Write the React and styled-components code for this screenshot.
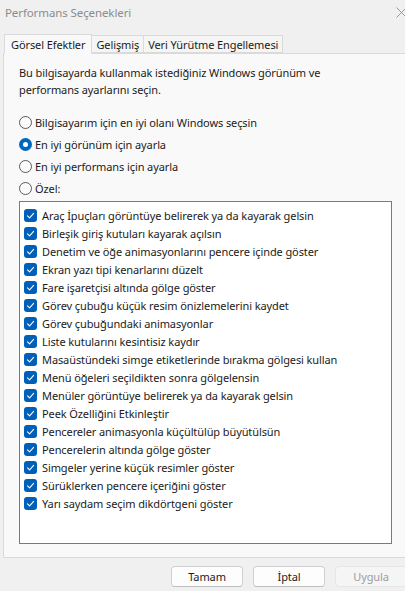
import React from "react";
import styled, { createGlobalStyle } from "styled-components";

const Global = createGlobalStyle`
  html, body { margin: 0; padding: 0; }
  body { font-family: "Noto Sans", "Open Sans", sans-serif; background: #f0f0f0; }
  * { box-sizing: border-box; }
`;

const Window = styled.div`
  width: 405px;
  height: 591px;
  overflow: hidden;
  background: #f0f0f0;
  display: flex;
  flex-direction: column;
  font-size: 11px;
  letter-spacing: -0.1px;
  color: #1b1b1b;
`;

const TitleBar = styled.div`
  height: 24px;
  display: flex;
  align-items: center;
  justify-content: space-between;
  padding: 0 0 0 5px;
  color: #8c8c8c;
  font-size: 11.5px;
`;

const Close = styled.div`
  width: 20px;
  display: flex;
  justify-content: flex-end;
  margin-right: -2px;
`;

const Body = styled.div`
  padding: 9px 0 0 3px;
  display: flex;
  flex-direction: column;
`;

const TabStrip = styled.div`
  display: flex;
  align-items: flex-end;
  height: 20px;
  padding-left: 1px;
  position: relative;
  z-index: 1;
`;

const Tab = styled.div`
  height: ${(p) => (p.$active ? "20px" : "18px")};
  padding: 0 ${(p) => (p.$active ? "6px" : "4px")};
  display: flex;
  align-items: center;
  background: ${(p) => (p.$active ? "#f9f9f9" : "#f5f5f5")};
  border: 1px solid #dadada;
  border-bottom: 1px solid ${(p) => (p.$active ? "#f9f9f9" : "#dadada")};
  margin-left: ${(p) => (p.$active ? "0" : "-1px")};
  margin-bottom: ${(p) => (p.$active ? "-1px" : "0")};
  color: #1b1b1b;
  white-space: nowrap;
`;

const Panel = styled.div`
  width: 410px;
  height: 505px;
  background: #f9f9f9;
  border: 1px solid #dadada;
  padding: 10px 0 0 15px;
  display: flex;
  flex-direction: column;
`;

const Description = styled.p`
  margin: 0;
  width: 330px;
  line-height: 17px;
`;

const RadioGroup = styled.div`
  margin-top: 13px;
  display: flex;
  flex-direction: column;
`;

const RadioRow = styled.label`
  height: 22px;
  display: flex;
  align-items: center;
  gap: 3px;
  white-space: nowrap;
`;

const RadioCircle = styled.span`
  width: 13px;
  height: 13px;
  border-radius: 50%;
  border: ${(p) => (p.$on ? "none" : "1px solid #5a5a5a")};
  background: ${(p) => (p.$on ? "#0067c0" : "#fbfbfb")};
  display: flex;
  align-items: center;
  justify-content: center;
  flex: none;
  &::after {
    content: "";
    display: ${(p) => (p.$on ? "block" : "none")};
    width: 5px;
    height: 5px;
    border-radius: 50%;
    background: #fff;
  }
`;

const ListBox = styled.div`
  margin-top: 2px;
  width: 373px;
  height: 343px;
  background: #fff;
  border: 1px solid #7a7a7a;
  padding: 4px 0 0 4px;
  display: flex;
  flex-direction: column;
`;

const CheckRow = styled.div`
  height: 18px;
  display: flex;
  align-items: center;
  gap: 5px;
  white-space: nowrap;
`;

const CheckBox = styled.span`
  width: 13px;
  height: 13px;
  border-radius: 3px;
  background: #005fb8;
  display: flex;
  align-items: center;
  justify-content: center;
  flex: none;
`;

const Footer = styled.div`
  display: flex;
  justify-content: flex-end;
  gap: 10px;
  padding: 8px 0 0 0;
  margin-right: -2px;
`;

const Button = styled.button`
  width: 72px;
  height: 21px;
  font-family: inherit;
  font-size: 11px;
  letter-spacing: inherit;
  border-radius: 4px;
  border: 1px solid ${(p) => (p.$disabled ? "#e6e6e6" : "#d0d0d0")};
  border-bottom-color: ${(p) => (p.$disabled ? "#e6e6e6" : "#bdbdbd")};
  background: ${(p) => (p.$disabled ? "#f5f5f5" : "#fdfdfd")};
  color: ${(p) => (p.$disabled ? "#9d9d9d" : "#1b1b1b")};
  padding: 0;
`;

const Check = () => (
  <svg width="9" height="9" viewBox="0 0 9 9">
    <path d="M1.5 4.8 L3.6 6.8 L7.6 2.4" fill="none" stroke="#fff" strokeWidth="1.1" strokeLinecap="round" strokeLinejoin="round" />
  </svg>
);

const radios = [
  { label: "Bilgisayarım için en iyi olanı Windows seçsin", on: false },
  { label: "En iyi görünüm için ayarla", on: true },
  { label: "En iyi performans için ayarla", on: false },
  { label: "Özel:", on: false },
];

const items = [
  "Araç İpuçları görüntüye belirerek ya da kayarak gelsin",
  "Birleşik giriş kutuları kayarak açılsın",
  "Denetim ve öğe animasyonlarını pencere içinde göster",
  "Ekran yazı tipi kenarlarını düzelt",
  "Fare işaretçisi altında gölge göster",
  "Görev çubuğu küçük resim önizlemelerini kaydet",
  "Görev çubuğundaki animasyonlar",
  "Liste kutularını kesintisiz kaydır",
  "Masaüstündeki simge etiketlerinde bırakma gölgesi kullan",
  "Menü öğeleri seçildikten sonra gölgelensin",
  "Menüler görüntüye belirerek ya da kayarak gelsin",
  "Peek Özelliğini Etkinleştir",
  "Pencereler animasyonla küçültülüp büyütülsün",
  "Pencerelerin altında gölge göster",
  "Simgeler yerine küçük resimler göster",
  "Sürüklerken pencere içeriğini göster",
  "Yarı saydam seçim dikdörtgeni göster",
];

export default function App() {
  return (
    <>
      <Global />
      <Window>
        <TitleBar>
          <span>Performans Seçenekleri</span>
          <Close>
            <svg width="11" height="11" viewBox="0 0 11 11">
              <path d="M0.5 0.5 L10.5 10.5 M10.5 0.5 L0.5 10.5" stroke="#9a9a9a" strokeWidth="1" />
            </svg>
          </Close>
        </TitleBar>
        <Body>
          <TabStrip>
            <Tab $active>Görsel Efektler</Tab>
            <Tab>Gelişmiş</Tab>
            <Tab>Veri Yürütme Engellemesi</Tab>
          </TabStrip>
          <Panel>
            <Description>
              Bu bilgisayarda kullanmak istediğiniz Windows görünüm ve
              <br />
              performans ayarlarını seçin.
            </Description>
            <RadioGroup>
              {radios.map((r) => (
                <RadioRow key={r.label}>
                  <RadioCircle $on={r.on} />
                  {r.label}
                </RadioRow>
              ))}
            </RadioGroup>
            <ListBox>
              {items.map((t) => (
                <CheckRow key={t}>
                  <CheckBox>
                    <Check />
                  </CheckBox>
                  {t}
                </CheckRow>
              ))}
            </ListBox>
          </Panel>
        </Body>
        <Footer>
          <Button>Tamam</Button>
          <Button>İptal</Button>
          <Button $disabled>Uygula</Button>
        </Footer>
      </Window>
    </>
  );
}
